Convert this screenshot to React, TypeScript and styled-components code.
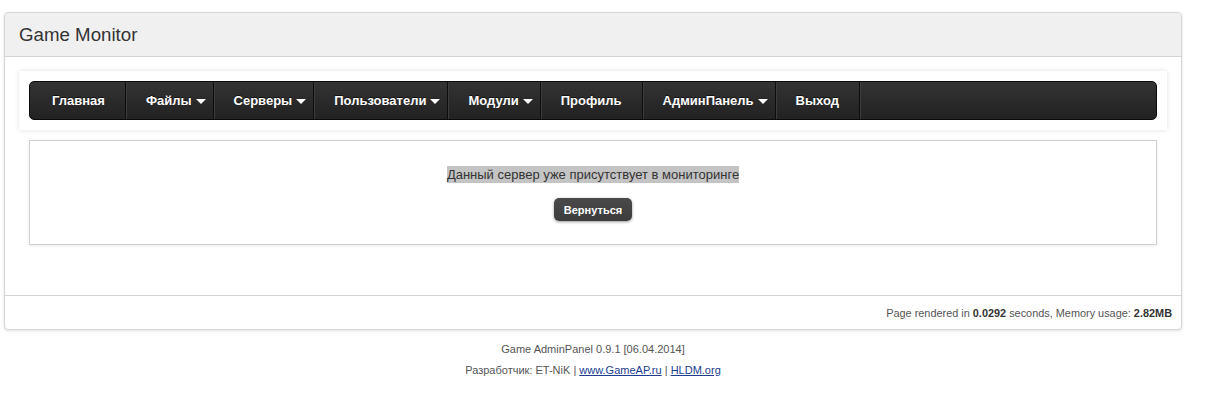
import React from "react";
import styled, { createGlobalStyle } from "styled-components";

const Global = createGlobalStyle`
  html, body { margin: 0; padding: 0; background: #fff; }
  body { font-family: "Liberation Sans", Arial, sans-serif; color: #333; }
`;

const Page = styled.div`
  padding: 12px 35px 0 4px;
`;

const Panel = styled.div`
  border: 1px solid #d6d6d6;
  border-radius: 4px;
  background: #fff;
  box-shadow: 0 1px 3px rgba(0, 0, 0, 0.12);
  overflow: hidden;
`;

const PanelHeading = styled.div`
  height: 43px;
  display: flex;
  align-items: center;
  padding: 0 14px;
  background: #f0f0f0;
  border-bottom: 1px solid #d4d4d4;
  font-size: 18.7px;
  color: #333;
`;

const PanelBody = styled.div`
  padding: 14px 14px 50px;
`;

const Well = styled.div`
  background: #fff;
  padding: 10px;
  box-shadow: 0 0 5px rgba(0, 0, 0, 0.12);
`;

const NavBar = styled.nav`
  display: flex;
  height: 37px;
  border: 1px solid #0a0a0a;
  border-radius: 5px;
  background: linear-gradient(#333333, #222222);
  overflow: hidden;
`;

const NavItem = styled.a<{ $drop?: boolean }>`
  display: flex;
  align-items: center;
  padding: ${(p) => (p.$drop ? "0 7px 0 20px" : "0 20px")};
  border-right: 1px solid #0d0d0d;
  box-shadow: 1px 0 0 #3c3c3c;
  color: #fff;
  font-weight: bold;
  font-size: 13px;
  text-decoration: none;
  text-shadow: 0 -1px 0 rgba(0, 0, 0, 0.6);
  white-space: nowrap;

  &:first-child {
    padding: 0 20px 0 22px;
  }
`;

const Caret = styled.span`
  display: inline-block;
  margin-left: 4px;
  margin-top: 2px;
  width: 0;
  height: 0;
  border-left: 5px solid transparent;
  border-right: 5px solid transparent;
  border-top: 5px solid #fff;
`;

const MessageBox = styled.div`
  margin: 10px 10px 0;
  border: 1px solid #cfcfcf;
  box-shadow: 0 1px 3px rgba(0, 0, 0, 0.08);
  padding: 25px 0 23px;
  display: flex;
  flex-direction: column;
  align-items: center;
  gap: 15px;
`;

const Message = styled.span`
  font-size: 13px;
  line-height: 17px;
  color: #333;
  background: #c4c4c4;
`;

const BackButton = styled.button`
  height: 23px;
  padding: 0 10px;
  border: none;
  border-radius: 5px;
  background: linear-gradient(#4a4a4a, #3c3c3c);
  box-shadow: 0 1px 3px rgba(0, 0, 0, 0.4);
  color: #fff;
  font-family: "Liberation Sans", Arial, sans-serif;
  font-weight: bold;
  font-size: 11px;
  cursor: pointer;
`;

const PanelFooter = styled.div`
  border-top: 1px solid #d4d4d4;
  height: 33px;
  display: flex;
  align-items: center;
  justify-content: flex-end;
  padding: 0 9px;
  font-size: 10.9px;
  color: #555;
`;

const Strong = styled.b`
  color: #333;
`;

const Credits = styled.div`
  padding-top: 9px;
  text-align: center;
  font-size: 11px;
  line-height: 21px;
  color: #555;
`;

const Link = styled.a`
  color: #1a3d8f;
  text-decoration: underline;
`;

const items: { label: string; drop?: boolean }[] = [
  { label: "Главная" },
  { label: "Файлы", drop: true },
  { label: "Серверы", drop: true },
  { label: "Пользователи", drop: true },
  { label: "Модули", drop: true },
  { label: "Профиль" },
  { label: "АдминПанель", drop: true },
  { label: "Выход" },
];

export default function App() {
  return (
    <>
      <Global />
      <Page>
        <Panel>
          <PanelHeading>Game Monitor</PanelHeading>
          <PanelBody>
            <Well>
              <NavBar>
                {items.map((it) => (
                  <NavItem key={it.label} href="#" $drop={it.drop}>
                    {it.label}
                    {it.drop && <Caret />}
                  </NavItem>
                ))}
              </NavBar>
            </Well>
            <MessageBox>
              <Message>Данный сервер уже присутствует в мониторинге</Message>
              <BackButton>Вернуться</BackButton>
            </MessageBox>
          </PanelBody>
          <PanelFooter>
            Page rendered in&nbsp;<Strong>0.0292</Strong>&nbsp;seconds, Memory usage:&nbsp;
            <Strong>2.82MB</Strong>
          </PanelFooter>
        </Panel>
        <Credits>
          <div>Game AdminPanel 0.9.1 [06.04.2014]</div>
          <div>
            Разработчик: ET-NiK | <Link href="#">www.GameAP.ru</Link> |{" "}
            <Link href="#">HLDM.org</Link>
          </div>
        </Credits>
      </Page>
    </>
  );
}
